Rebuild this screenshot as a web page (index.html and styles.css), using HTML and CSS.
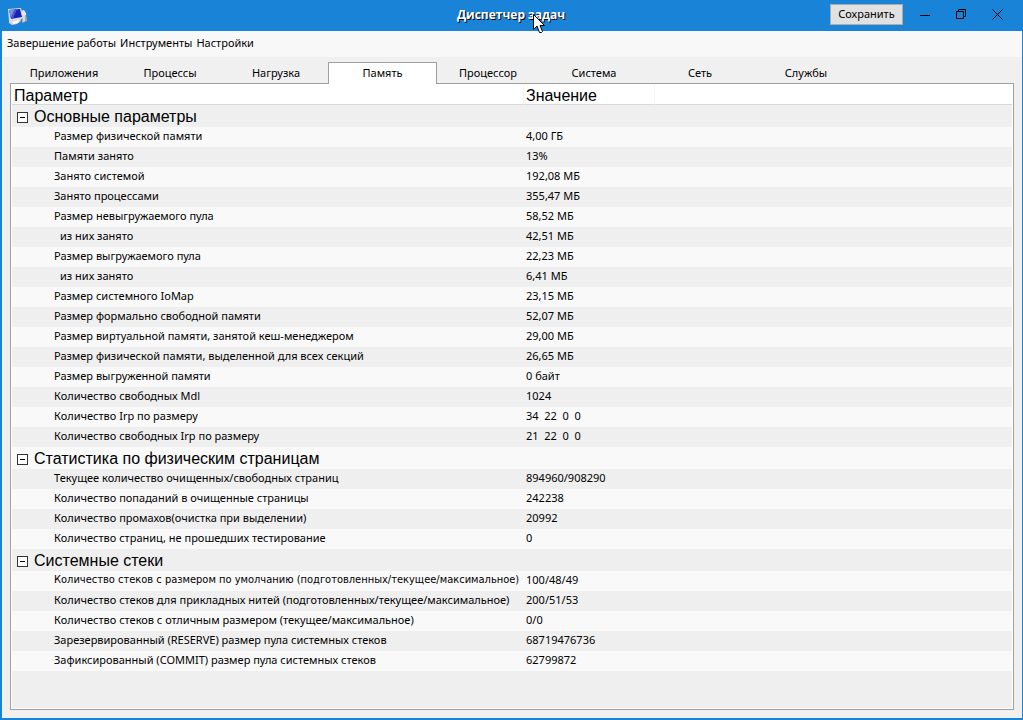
FILE: index.html
```html
<!DOCTYPE html>
<html lang="ru">
<head>
<meta charset="utf-8">
<meta name="viewport" content="width=device-width, initial-scale=1">
<title>Диспетчер задач</title>
<link rel="stylesheet" href="styles.css">
</head>
<body>
<div class="window">
  <header class="titlebar">
    <svg class="app-icon" width="22" height="20" viewBox="0 0 22 20" aria-hidden="true">
      <path d="M15 6l4-1 1 8-5 2z" fill="#a9abb0"/>
      <path d="M13 3l4-1 2 3v2l-5 1z" fill="#e4e6ea"/>
      <path d="M16 7l2 0v6l-2 1z" fill="#d8dade"/>
      <path d="M1 1l13-1 2 10-3 2-11 1z" fill="#d9dff2"/>
      <path d="M2 2l11-1 2 8-11 2z" fill="#1a22b4"/>
      <path d="M2 2l6-1-4 9z" fill="#7d8fe6"/>
      <path d="M8 1h2L6 11H4z" fill="#4459d4"/>
      <path d="M2 12l11-1 1 2-4 3-5 1-3-2z" fill="#dcd9d4"/>
      <path d="M5 14l6-2 1 2-5 2z" fill="#fff"/>
    </svg>
    <h1 class="title">Диспетчер задач
      <svg class="cursor" width="12" height="20" viewBox="0 0 12 20" aria-hidden="true">
        <path d="M.5.5v15l3.500-3.500 2.500 6.500h2l1-1-2.500-6h4.500z" fill="#fff" stroke="#000"/>
      </svg>
    </h1>
    <div class="window-actions">
      <button class="save" type="button">Сохранить</button>
      <button class="control" type="button" aria-label="Свернуть">
        <svg width="11" height="11" viewBox="0 0 11 11"><path d="M0 6.500h10" fill="none" stroke="#000"/></svg>
      </button>
      <button class="control" type="button" aria-label="Восстановить">
        <svg width="11" height="11" viewBox="0 0 11 11"><path d="M.5 2.500h7v7h-7zM2.500 2.500v-2h7v7h-2" fill="none" stroke="#000"/></svg>
      </button>
      <button class="control" type="button" aria-label="Закрыть">
        <svg width="11" height="11" viewBox="0 0 11 11"><path d="M.5.5l10 10M10.500.5l-10 10" fill="none" stroke="#000"/></svg>
      </button>
    </div>
  </header>
  <nav class="menu">
    <button class="menu-item" type="button">Завершение работы</button>
    <button class="menu-item" type="button">Инструменты</button>
    <button class="menu-item" type="button">Настройки</button>
  </nav>
  <main class="content">
    <div class="tabs" role="tablist">
      <button class="tab" type="button" role="tab">Приложения</button>
      <button class="tab" type="button" role="tab">Процессы</button>
      <button class="tab" type="button" role="tab">Нагрузка</button>
      <button class="tab tab-active" type="button" role="tab" aria-selected="true">Память</button>
      <button class="tab" type="button" role="tab">Процессор</button>
      <button class="tab" type="button" role="tab">Система</button>
      <button class="tab" type="button" role="tab">Сеть</button>
      <button class="tab" type="button" role="tab">Службы</button>
    </div>
    <section class="pane" role="tabpanel">
      <table class="params">
        <colgroup><col class="col-name"><col class="col-value"><col></colgroup>
        <thead><tr><th scope="col">Параметр</th><th scope="col">Значение</th><td></td></tr></thead>
        <tbody>
          <tr class="group"><th colspan="3"><div class="group-title"><button class="toggle" type="button" aria-label="Свернуть группу"></button>Основные параметры</div></th></tr>
          <tr><td>Размер физической памяти</td><td>4,00 ГБ</td><td></td></tr>
          <tr><td>Памяти занято</td><td>13%</td><td></td></tr>
          <tr><td>Занято системой</td><td>192,08 МБ</td><td></td></tr>
          <tr><td>Занято процессами</td><td>355,47 МБ</td><td></td></tr>
          <tr><td>Размер невыгружаемого пула</td><td>58,52 МБ</td><td></td></tr>
          <tr class="nested"><td>из них занято</td><td>42,51 МБ</td><td></td></tr>
          <tr><td>Размер выгружаемого пула</td><td>22,23 МБ</td><td></td></tr>
          <tr class="nested"><td>из них занято</td><td>6,41 МБ</td><td></td></tr>
          <tr><td>Размер системного IoMap</td><td>23,15 МБ</td><td></td></tr>
          <tr><td>Размер формально свободной памяти</td><td>52,07 МБ</td><td></td></tr>
          <tr><td>Размер виртуальной памяти, занятой кеш-менеджером</td><td>29,00 МБ</td><td></td></tr>
          <tr><td>Размер физической памяти, выделенной для всех секций</td><td>26,65 МБ</td><td></td></tr>
          <tr><td>Размер выгруженной памяти</td><td>0 байт</td><td></td></tr>
          <tr><td>Количество свободных Mdl</td><td>1024</td><td></td></tr>
          <tr><td>Количество Irp по размеру</td><td>34  22  0  0</td><td></td></tr>
          <tr><td>Количество свободных Irp по размеру</td><td>21  22  0  0</td><td></td></tr>
          <tr class="group"><th colspan="3"><div class="group-title"><button class="toggle" type="button" aria-label="Свернуть группу"></button>Статистика по физическим страницам</div></th></tr>
          <tr><td>Текущее количество очищенных/свободных страниц</td><td>894960/908290</td><td></td></tr>
          <tr><td>Количество попаданий в очищенные страницы</td><td>242238</td><td></td></tr>
          <tr><td>Количество промахов(очистка при выделении)</td><td>20992</td><td></td></tr>
          <tr><td>Количество страниц, не прошедших тестирование</td><td>0</td><td></td></tr>
          <tr class="group"><th colspan="3"><div class="group-title"><button class="toggle" type="button" aria-label="Свернуть группу"></button>Системные стеки</div></th></tr>
          <tr class="long"><td>Количество стеков с размером по умолчанию (подготовленных/текущее/максимальное)</td><td>100/48/49</td><td></td></tr>
          <tr><td>Количество стеков для прикладных нитей (подготовленных/текущее/максимальное)</td><td>200/51/53</td><td></td></tr>
          <tr><td>Количество стеков с отличным размером (текущее/максимальное)</td><td>0/0</td><td></td></tr>
          <tr><td>Зарезервированный (RESERVE) размер пула системных стеков</td><td>68719476736</td><td></td></tr>
          <tr><td>Зафиксированный (COMMIT) размер пула системных стеков</td><td>62799872</td><td></td></tr>
        </tbody>
      </table>
    </section>
  </main>
</div>
</body>
</html>
```

FILE: styles.css
```css
* { box-sizing: border-box; }

body {
  margin: 0;
  color: #000;
  font: 11px/16px "Noto Sans", "Open Sans", sans-serif;
}

button {
  margin: 0;
  padding: 0;
  border: 0;
  background: none;
  color: inherit;
  font: inherit;
}

.window {
  display: flex;
  flex-direction: column;
  min-height: 100vh;
  border: solid #1983d8;
  border-width: 0 1px 2px 2px;
  background: #f0f0f0;
}

.titlebar {
  display: grid;
  grid-template-columns: 1fr auto 1fr;
  align-items: center;
  height: 31px;
  margin: 0 -1px 0 -2px;
  padding: 0 8px 0 7px;
  background: #1983d8;
}

.app-icon { display: block; margin-top: 4px; }

.title {
  position: relative;
  margin: 0;
  color: #fff;
  font-family: "Open Sans", "Noto Sans", sans-serif;
  font-size: 12px;
  line-height: 28px;
  padding-bottom: 2px;
  text-shadow: 1px 1px 0 #000;
}

.cursor {
  position: absolute;
  top: 13px;
  left: 76px;
}

.window-actions {
  display: flex;
  justify-content: flex-end;
  align-items: center;
  height: 28px;
  align-self: start;
}

.save {
  width: 73px;
  height: 21px;
  margin-right: 4px;
  border: 1px solid #adadad;
  background: #e1e1e1;
}

.control {
  display: grid;
  place-items: center;
  width: 36px;
  height: 26px;
}

.menu {
  display: flex;
  gap: 4px;
  height: 26px;
  padding: 0 5px 2px;
  background: #f8f8f8;
}

.content {
  flex: 1;
  display: flex;
  flex-direction: column;
  padding: 5px 8px 8px;
}

.tabs {
  display: flex;
  padding-left: 1px;
}

.tab {
  width: 106px;
  height: 21px;
}

.tab-active {
  z-index: 1;
  width: 109px;
  margin: 0 -2px -1px -1px;
  height: 22px;
  padding-bottom: 2px;
  border: 1px solid #a0a0a0;
  border-bottom: 0;
  background: #fff;
}

.pane {
  flex: 1;
  border: 1px solid #a0a0a0;
  outline: 1px solid #fff;
  outline-offset: -2px;
  background: #efefef;
}

.params {
  width: 100%;
  table-layout: fixed;
  border-collapse: separate;
  border-spacing: 0;
}

.col-name { width: 513px; }
.col-value { width: 131px; }

.params th,
.params td {
  height: 20px;
  padding: 0 0 2px 2px;
  line-height: 16px;
  text-align: left;
  white-space: pre;
}

.params th {
  padding-bottom: 0;
  font: 16px/20px "Liberation Sans", Arial, sans-serif;
}

.params thead th,
.params thead td {
  height: 21px;
  border-bottom: 1px solid #d9d9d9;
  background: #fff;
}

.params thead th {
  padding: 3px 0 0 3px;
  border-right: 1px solid #f4f4f4;
  line-height: 17px;
}
.params thead th + th { padding-left: 2px; }

.params tbody tr:nth-child(even) { background: #f9f9f9; }
.params tbody td:first-child { padding-left: 43px; }
.params .nested td:first-child { padding-left: 49px; }
.params .long td:first-child { font-family: "DejaVu Sans Condensed", "Noto Sans", sans-serif; }

.params .group th {
  height: 22px;
  padding-left: 6px;
}

.group-title {
  display: flex;
  align-items: center;
  gap: 6px;
  padding-top: 2px;
  line-height: 20px;
}

.toggle {
  display: grid;
  place-items: center;
  width: 11px;
  height: 11px;
  border: 1px solid #333;
  background: #fff;
}

.toggle::before {
  content: "";
  width: 5px;
  height: 1px;
  background: #000;
}
```
